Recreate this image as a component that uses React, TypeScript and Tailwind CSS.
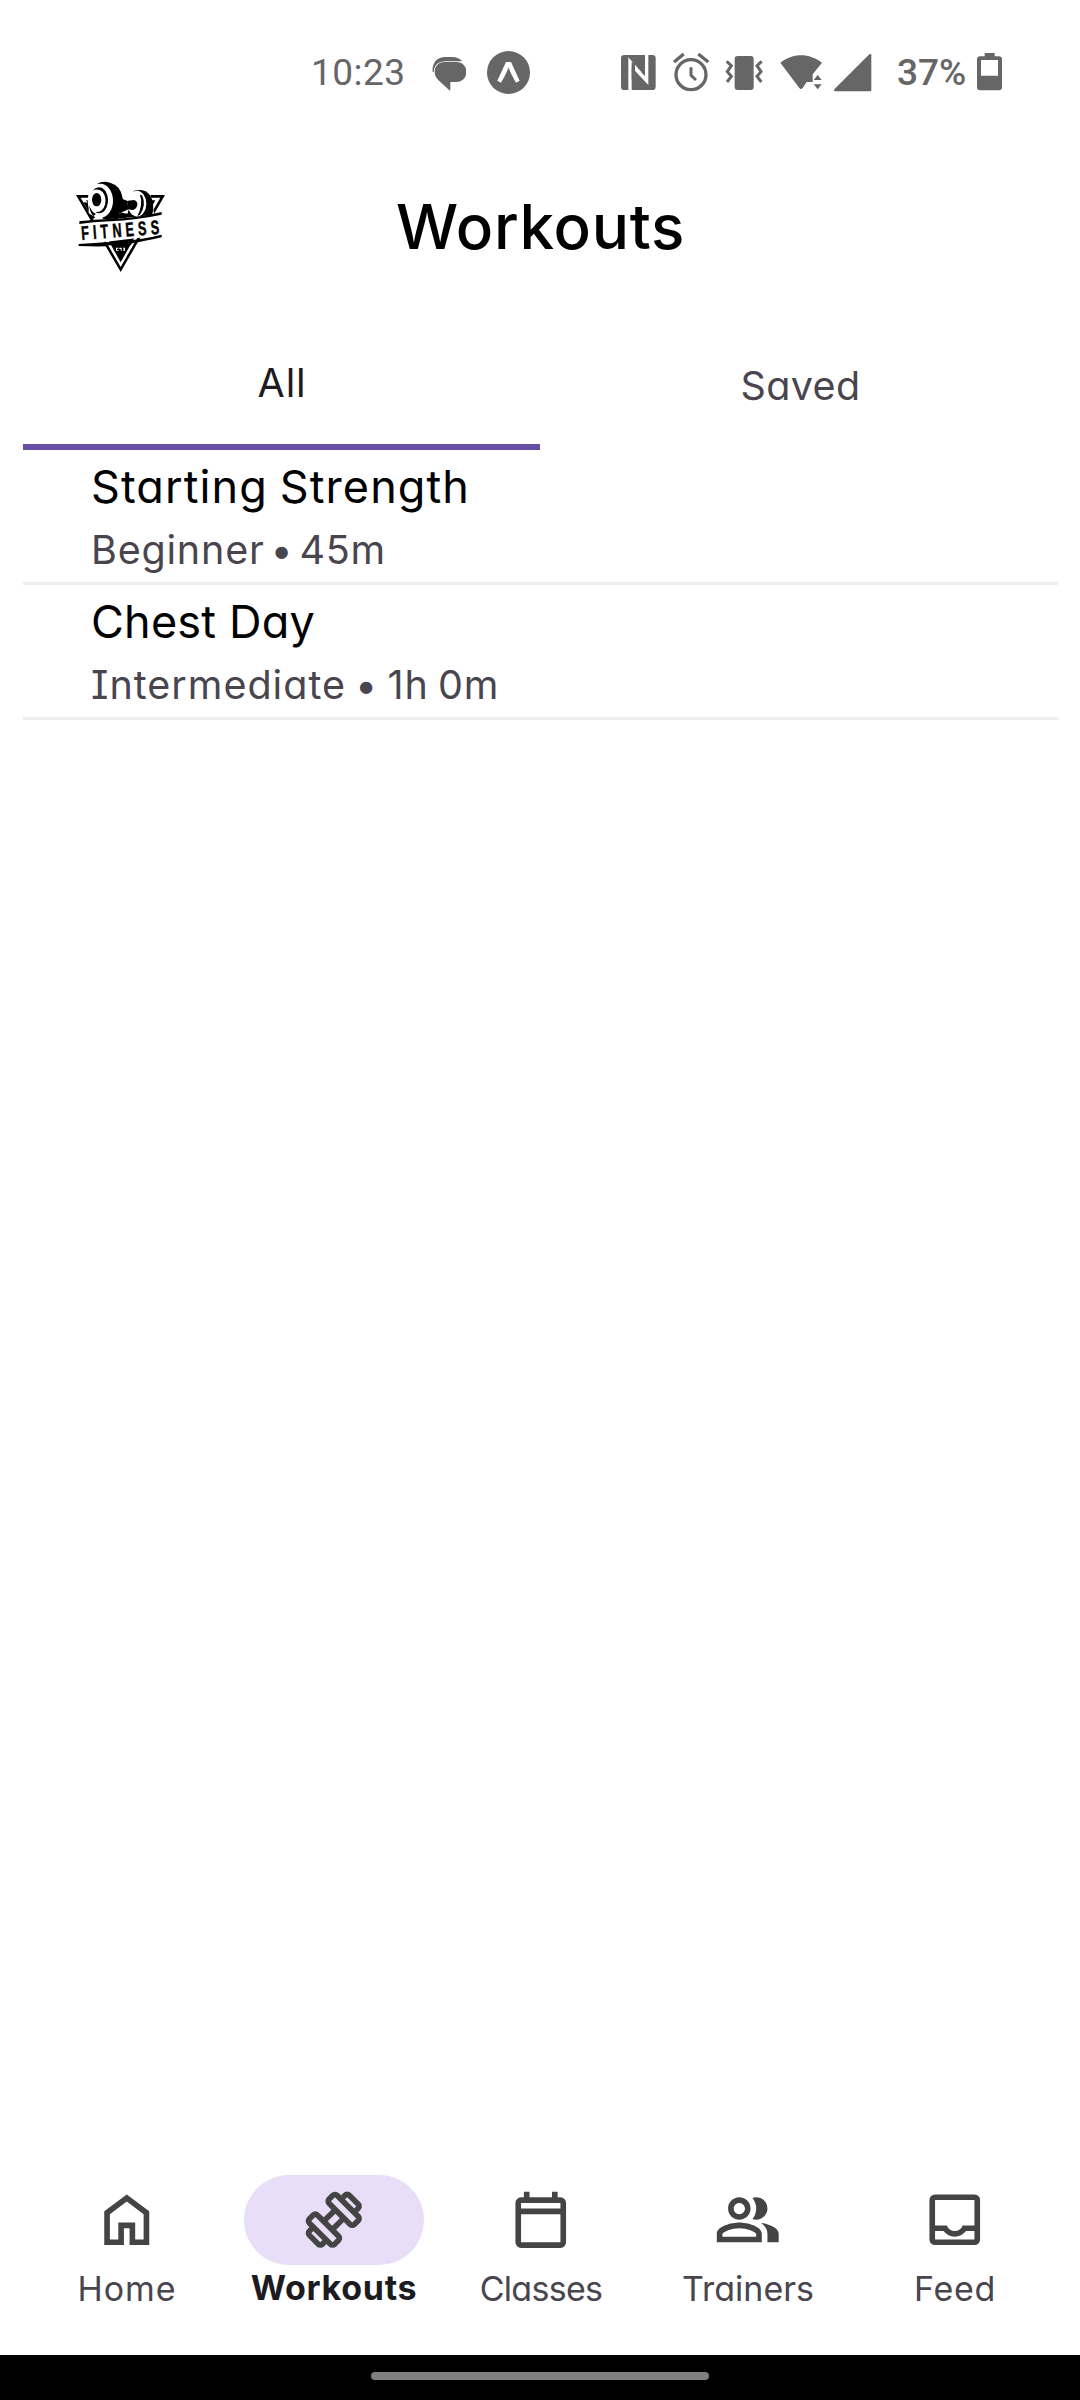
import type { ReactNode } from 'react'

const INK = '#666666'

function StatusIcon({ x, w, className, children }: { x: number; w: number; className: string; children: ReactNode }) {
  return (
    <svg viewBox={`${x} 60 ${w} 135`} className={`h-[45px] shrink-0 ${className}`} fill={INK}>
      {children}
    </svg>
  )
}

function StatusBar() {
  return (
    <div className="flex h-[145px] items-center pl-[311px] font-['Roboto',sans-serif] text-[37px] leading-[45px] text-[#666666]">
      <span className="w-[121px] shrink-0 tracking-[0.500px]">10:23</span>
      <StatusIcon x={426} w={102} className="w-[34px]">
        <path d="M428 126C425 100 440 81 466 81H486C500 81 511 86 516 94H466C446 94 433 104 431 126Z" />
        <path d="M464 96H499C517 96 529 108 529 126S517 156 499 156H481V181C478 181 476 179 474 177L447 152C439 145 434 137 434 126C434 108 446 96 464 96Z" />
      </StatusIcon>
      <StatusIcon x={591} w={129} className="ml-[21px] w-[43px]">
        <circle cx="655.500" cy="127.500" r="64.500" />
        <path d="M648 96H663L689 152L678 158Q660 128 655.500 112Q651 128 633 158L622 152Z" fill="#fff" />
      </StatusIcon>
      <StatusIcon x={62} w={105} className="ml-[91px] w-[35px]">
        <rect x="62" y="75" width="104" height="105" rx="10" />
        <path d="M84 82L134 138V75H144V165L94 112V180H84Z" fill="#fff" />
        <path d="M104 102V153L94 148V95ZM134 105V137L124 128V105Z" />
      </StatusIcon>
      <StatusIcon x={219} w={108} className="ml-[17px] w-[36px]">
        <circle cx="273" cy="134" r="45" fill="none" stroke={INK} strokeWidth="10" />
        <path d="M222 96L251 72M295 72L325 96" stroke={INK} strokeWidth="10" fill="none" />
        <path d="M273 112V136L288 150" stroke={INK} strokeWidth="9" fill="none" />
      </StatusIcon>
      <StatusIcon x={375} w={114} className="ml-[16px] w-[38px]">
        <rect x="404" y="78" width="57" height="102" rx="9" />
        <path d="M380 94L394 107L382 125L394 139L381 156M485 94L471 107L483 125L471 139L484 156" fill="none" stroke={INK} strokeWidth="9" />
      </StatusIcon>
      <StatusIcon x={540} w={126} className="ml-[17px] w-[42px]">
        <path d="M541 98C578 68 628 68 666 98L638 133V156H620L608 174Q603 180 598 174Z" />
        <path d="M653 135L665 150H641ZM653 178L665 163H641Z" />
      </StatusIcon>
      <StatusIcon x={702} w={114} className="ml-[12px] w-[38px]">
        <path d="M703 178L808 73Q814 70 814 76V180Q814 184 810 184H706Q700 183 703 178Z" />
      </StatusIcon>
      <span className="ml-[25px] w-[80px] shrink-0 font-medium">37%</span>
      <StatusIcon x={1131} w={75} className="w-[25px]">
        <path
          fillRule="evenodd"
          d="M1154 69H1184V79H1197Q1206 79 1206 88V172Q1206 181 1197 181H1140Q1131 181 1131 172V88Q1131 79 1140 79H1154ZM1143 90V137H1194V90Z"
        />
      </StatusIcon>
    </div>
  )
}

function Logo() {
  return (
    <svg viewBox="0 0 360 342" className="h-[114px] w-[120px]">
      {/* shield */}
      <path d="M48 75H315L182 306Z" />
      <path d="M62 83H301L182 291Z" fill="#fff" />
      <path d="M78 91H286L182 277Z" />
      {/* clearing behind the weights */}
      <path d="M88 70H112V36L200 60L270 66L284 140L120 160L86 130Z" fill="#fff" />
      <path d="M86 88V130L106 142L98 148L70 96L80 98Z" />
      {/* left weight */}
      <path d="M112 41Q128 32 150 38Q182 46 188 84Q192 122 168 142Q150 152 128 146Z" />
      <ellipse cx="121" cy="92" rx="38" ry="51" fill="#fff" />
      <path d="M97 62Q118 42 136 62Q150 86 140 112Q128 138 106 126Q128 128 135 104Q140 82 128 66Q114 54 97 62Z" />
      <ellipse cx="110" cy="89" rx="14" ry="20" />
      <path d="M88 106Q94 126 108 132L100 138Q88 126 88 106Z" />
      {/* bar */}
      <path d="M180 84L205 94Q216 88 228 96V112Q216 122 205 118L180 130Z" />
      {/* right weight */}
      <path d="M222 62Q254 54 270 76Q286 100 276 138L214 148L200 140Z" />
      <ellipse cx="231" cy="101" rx="28" ry="39" fill="#fff" />
      <path d="M204 92L222 90Q234 94 232 106Q228 120 216 120L202 117Z" />
      <path d="M246 76Q260 104 240 134L232 138Q250 104 240 74Z" />
      <path d="M140 140L186 128L206 132L230 140L180 152Z" />
      {/* banner */}
      <path d="M54 160L306 131L302 196L58 225Z" fill="#fff" />
      <path d="M58 154Q100 148 150 147Q230 144 305 126V134Q230 150 150 154Q100 156 58 162Z" />
      <path d="M56 222Q130 218 180 214Q250 208 305 194V202Q250 214 216 220L212 226H146L142 229Q100 230 56 228Z" />
      <g transform="translate(65 210) rotate(-4.500) scale(0.64 1)">
        <text
          x="0"
          y="0"
          textLength="366"
          fontFamily="'Liberation Sans', sans-serif"
          fontWeight="700"
          fontSize="59"
          stroke="#000"
          strokeWidth="1.500"
        >
          FITNESS
        </text>
      </g>
      <path d="M168 233h7v3h-4v4h5v2h-8ZM178 233h7v9h-3v-5h-4ZM189 233h6v9h-6v-3h3v-3h-3Z" fill="#fff" />
    </svg>
  )
}

function Header() {
  return (
    <header className="grid h-[164px] grid-cols-3 items-center">
      <div className="pl-[60px]">
        <Logo />
      </div>
      <h1 className="pl-[1px] text-center text-[62px] leading-[80px] font-medium tracking-[0.700px] whitespace-nowrap text-black">
        Workouts
      </h1>
    </header>
  )
}

function Tabs() {
  return (
    <div className="mt-[13px] mr-[22px] ml-[23px] grid h-[128px] grid-cols-[517px_518px] text-[39.500px] leading-[50px]">
      <button className="flex items-center justify-center border-b-[6px] border-[#6750a4] pl-[1px] tracking-[0.800px] text-[#1c1b1f]">
        All
      </button>
      <button className="flex items-center justify-center pl-[3px] tracking-[0.400px] text-[#49454f]">Saved</button>
    </div>
  )
}

const workouts = [
  {
    name: 'Starting Strength',
    detail: 'Beginner • 45m',
    nameClass: 'tracking-[1.100px] [word-spacing:-2px]',
    detailClass: 'tracking-[0.800px] [word-spacing:-6px]',
  },
  {
    name: 'Chest Day',
    detail: 'Intermediate • 1h 0m',
    nameClass: 'tracking-[0.200px]',
    detailClass: 'tracking-[1px] [word-spacing:-3px]',
  },
]

function WorkoutList() {
  return (
    <ul className="mr-[22px] ml-[23px] flex-1">
      {workouts.map((w) => (
        <li key={w.name} className="h-[135px] border-b-[3px] border-[#eeeeee] pt-[5px] pl-[68px]">
          <p className={`text-[45px] leading-[64px] text-black ${w.nameClass}`}>{w.name}</p>
          <p className={`text-[39.500px] leading-[62px] text-[#49454f] ${w.detailClass}`}>{w.detail}</p>
        </li>
      ))}
    </ul>
  )
}

const navItems = [
  {
    label: 'Home',
    spacing: 'tracking-[0.900px]',
    box: '0 0 24 24',
    d: 'M6 19h3v-6h6v6h3v-9l-6-4.500L6 10v9Zm-2 2V9l8-6 8 6v12h-7v-6h-2v6H4Z',
  },
  {
    label: 'Workouts',
    active: true,
    spacing: 'tracking-[0.700px]',
    box: '0 -960 960 960',
    d: 'm826-585-56-56 30-31-128-128-31 30-57-57 30-31q23-23 57-22.500t57 23.500l129 129q23 23 23 56.500T857-615l-31 30ZM346-104q-23 23-56.500 23T233-104L104-233q-23-23-23-56.500t23-56.500l30-30 57 57-31 30 129 129 30-31 57 57-30 30Zm397-336 57-57-303-303-57 57 303 303ZM463-160l57-58-302-302-58 57 303 303Zm-6-234 110-109-64-64-109 110 63 63Zm63 290q-23 23-57 23t-57-23L104-406q-23-23-23-57t23-57l57-57q23-23 56.500-23t56.500 23l63 63 110-110-63-62q-23-23-23-57t23-57l57-57q23-23 56.500-23t56.500 23l303 303q23 23 23 56.500T857-441l-57 57q-23 23-57 23t-57-23l-62-63-110 110 63 63q23 23 23 56.500T577-161l-57 57Z',
  },
  {
    label: 'Classes',
    spacing: 'tracking-[-0.700px]',
    box: '0 -960 960 960',
    d: 'M200-80q-33 0-56.500-23.500T120-160v-560q0-33 23.500-56.500T200-800h40v-80h80v80h320v-80h80v80h40q33 0 56.500 23.500T840-720v560q0 33-23.500 56.500T760-80H200Zm0-80h560v-400H200v400Zm0-480h560v-80H200v80Z',
  },
  {
    label: 'Trainers',
    spacing: 'tracking-[0px]',
    box: '0 0 24 24',
    d: 'M16.670 13.130C18.040 14.060 19 15.320 19 17v3h4v-3c0-2.180-3.570-3.470-6.330-3.870zM15 12c2.210 0 4-1.790 4-4s-1.790-4-4-4c-.47 0-.91.1-1.330.24a5.980 5.980 0 0 1 0 7.520c.42.14.86.24 1.330.24zM9 12c2.210 0 4-1.790 4-4s-1.790-4-4-4-4 1.790-4 4 1.790 4 4 4zm0-6c1.100 0 2 .9 2 2s-.9 2-2 2-2-.9-2-2 .9-2 2-2zm0 7c-2.670 0-8 1.340-8 4v3h16v-3c0-2.660-5.330-4-8-4zm6 5H3v-.99C3.200 16.290 6.300 15 9 15s5.800 1.290 6 2v1z',
  },
  {
    label: 'Feed',
    spacing: 'tracking-[0.700px]',
    box: '0 -960 960 960',
    d: 'M200-120q-33 0-56.500-23.500T120-200v-560q0-33 23.500-56.500T200-840h560q33 0 56.500 23.500T840-760v560q0 33-23.500 56.500T760-120H200Zm0-80h560v-120H640q-30 38-71.500 59T480-240q-47 0-88.500-21T320-320H200v120Zm280-120q38 0 69-22t43-58h168v-360H200v360h168q12 36 43 58t69 22Z',
  },
]

function BottomNav() {
  return (
    <nav className="grid h-[180px] grid-cols-5 pr-[21.500px] pl-[23.500px] text-[34px] leading-[40px]">
      {navItems.map((n) => (
        <a key={n.label} className="flex flex-col items-center">
          <span className={`flex h-[90px] w-[180px] items-center justify-center rounded-full ${n.active ? 'bg-[#e8def8]' : ''}`}>
            <svg viewBox={n.box} className="size-[67.500px]" fill="#444444">
              <path d={n.d} />
            </svg>
          </span>
          <span className={`${n.spacing} ${n.active ? 'mt-[3px] font-bold text-[#1c1b1f]' : 'mt-[4px] text-[#49454f]'}`}>
            {n.label}
          </span>
        </a>
      ))}
    </nav>
  )
}

export default function App() {
  return (
    <div className="flex h-[2400px] w-[1080px] flex-col overflow-hidden bg-white font-['Inter',sans-serif] [font-feature-settings:'cv08','cv11']">
      <StatusBar />
      <Header />
      <Tabs />
      <WorkoutList />
      <BottomNav />
      <div className="flex h-[45px] justify-center bg-black pt-[17px]">
        <div className="h-[8px] w-[338px] rounded-full bg-[#808080]" />
      </div>
    </div>
  )
}
